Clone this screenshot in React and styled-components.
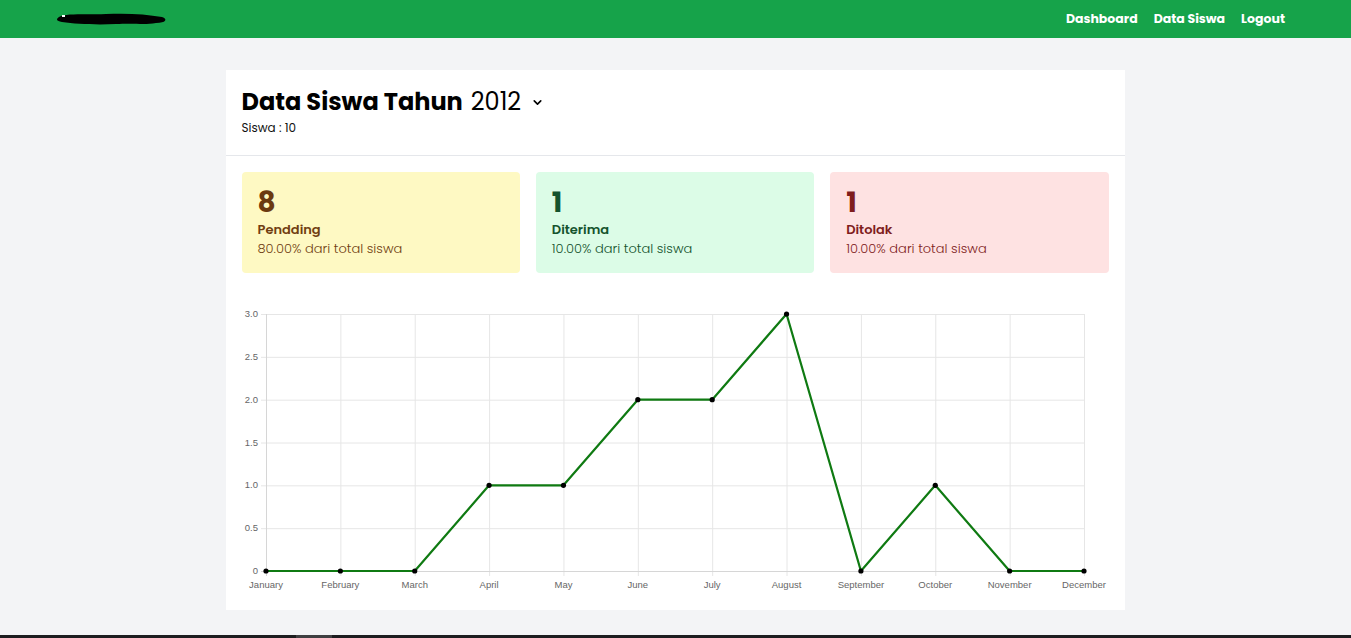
import React from 'react';
import styled, { createGlobalStyle } from 'styled-components';
import { ChevronDown } from 'lucide-react';

const GlobalStyle = createGlobalStyle`
  * { box-sizing: border-box; }
  body {
    margin: 0;
    background: #f3f4f6;
    font-family: "Poppins", "DejaVu Sans", "Noto Sans", sans-serif;
  }
`;

const months = ['January', 'February', 'March', 'April', 'May', 'June', 'July', 'August', 'September', 'October', 'November', 'December'];
const values = [0, 0, 0, 1, 1, 2, 2, 3, 0, 1, 0, 0];

const stats = [
  { count: 8, label: 'Pendding', pct: '80.00%', bg: '#fef9c3', fg: '#713f12', num: '#6b3a10' },
  { count: 1, label: 'Diterima', pct: '10.00%', bg: '#dcfce7', fg: '#14532d', num: '#14532d' },
  { count: 1, label: 'Ditolak', pct: '10.00%', bg: '#fee2e2', fg: '#7f1d1d', num: '#7f1d1d' },
];

const Nav = styled.nav`
  height: 38px;
  background: #16a34a;
  display: flex;
  align-items: center;
  justify-content: space-between;
  padding: 0 66px 0 56px;
`;

const Links = styled.div`
  display: flex;
  gap: 16px;
  a {
    color: #fff;
    font-weight: 700;
    font-size: 12.5px;
    text-decoration: none;
  }
`;

const Main = styled.main`
  padding: 32px 1px 25px 0;
`;

const Card = styled.section`
  width: 899px;
  margin: 0 auto;
  background: #fff;
  padding-bottom: 17px;
`;

const Header = styled.header`
  padding: 16px 16px 18px;
  border-bottom: 1px solid #e5e7eb;
`;

const TitleRow = styled.div`
  display: flex;
  align-items: center;
  gap: 8px;
  font-size: 24px;
  line-height: 32px;
  color: #000;
`;

const Title = styled.h1`
  margin: 0;
  font-size: inherit;
  font-weight: 700;
`;

const Year = styled.span`
  font-weight: 400;
  display: flex;
  align-items: center;
  gap: 10px;
`;

const Sub = styled.div`
  font-size: 12px;
  line-height: 18px;
  color: #111;
  margin-top: 1px;
`;

const Stats = styled.div`
  display: grid;
  grid-template-columns: repeat(3, 1fr);
  gap: 16px;
  padding: 16px;
`;

const Stat = styled.div`
  background: ${(p) => p.$bg};
  color: ${(p) => p.$fg};
  border-radius: 4px;
  height: 101px;
  padding: 12px 16px;
`;

const Count = styled.div`
  font-size: 28px;
  font-weight: 700;
  line-height: 38px;
  color: ${(p) => p.$c};
`;

const Label = styled.div`
  font-size: 13px;
  font-weight: 600;
  line-height: 18px;
  margin-top: -1px;
`;

const Desc = styled.div`
  font-size: 13px;
  line-height: 20px;
  font-weight: 300;
`;

const ChartWrap = styled.div`
  padding: 11px 16px 0;
  svg { display: block; }
  text {
    font-family: "Liberation Sans", Arial, sans-serif;
    font-size: 9.5px;
    fill: #666;
  }
`;

const Track = styled.div`
  height: 4px;
  background: #1d1d1f;
  padding-left: 296px;
`;

const Thumb = styled.div`
  width: 36px;
  height: 4px;
  background: #3f3f41;
`;

const Logo = () => (
  <svg width="112" height="16" viewBox="0 0 112 16">
    <path d="M3 6 C10 2 30 4 50 3 C70 2 90 3 106 6 C112 8 110 12 100 12 C88 14 80 12 60 13 C40 14 20 13 6 11 C0 10 0 8 3 6 Z" fill="#000" />
    <rect x="6" y="4" width="3" height="2" fill="#fff" />
  </svg>
);

const Chart = () => {
  const W = 867;
  const H = 293;
  const x0 = 24;
  const x1 = 842;
  const top = 14;
  const bottom = 271;
  const step = (x1 - x0) / 11;
  const xs = months.map((_, i) => x0 + i * step);
  const y = (v) => bottom - (v / 3) * (bottom - top);
  const ticks = [0, 0.5, 1, 1.5, 2, 2.5, 3];
  const pts = values.map((v, i) => `${xs[i]},${y(v)}`).join(' ');
  return (
    <svg width={W} height={H}>
      {ticks.map((t) => (
        <g key={t}>
          <line x1={x0 - 5} x2={x1} y1={y(t) + 0.5} y2={y(t) + 0.5} stroke="#e6e6e6" />
          <text x={x0 - 8} y={y(t) + 3} textAnchor="end">{t === 0 ? '0' : t.toFixed(1)}</text>
        </g>
      ))}
      {xs.map((x, i) => (
        <g key={i}>
          <line x1={x + 0.5} x2={x + 0.5} y1={top} y2={bottom + 5} stroke={i === 0 ? '#d6d6d6' : '#e6e6e6'} />
          <text x={x} y={288} textAnchor="middle">{months[i]}</text>
        </g>
      ))}
      <line x1={x0 - 5} x2={x1} y1={bottom + 0.5} y2={bottom + 0.5} stroke="#d6d6d6" />
      <polyline points={pts} fill="none" stroke="#0f7a12" strokeWidth="2.2" strokeLinejoin="round" />
      {values.map((v, i) => (
        <circle key={i} cx={xs[i]} cy={y(v)} r="2.6" fill="#000" />
      ))}
    </svg>
  );
};

export default function App() {
  return (
    <>
      <GlobalStyle />
      <Nav>
        <Logo />
        <Links>
          <a href="#">Dashboard</a>
          <a href="#">Data Siswa</a>
          <a href="#">Logout</a>
        </Links>
      </Nav>
      <Main>
        <Card>
          <Header>
            <TitleRow>
              <Title>Data Siswa Tahun</Title>
              <Year>
                2012
                <ChevronDown size={13} strokeWidth={3} />
              </Year>
            </TitleRow>
            <Sub>Siswa : 10</Sub>
          </Header>
          <Stats>
            {stats.map((s) => (
              <Stat key={s.label} $bg={s.bg} $fg={s.fg}>
                <Count $c={s.num}>{s.count}</Count>
                <Label>{s.label}</Label>
                <Desc>{s.pct} dari total siswa</Desc>
              </Stat>
            ))}
          </Stats>
          <ChartWrap>
            <Chart />
          </ChartWrap>
        </Card>
      </Main>
      <Track>
        <Thumb />
      </Track>
    </>
  );
}
